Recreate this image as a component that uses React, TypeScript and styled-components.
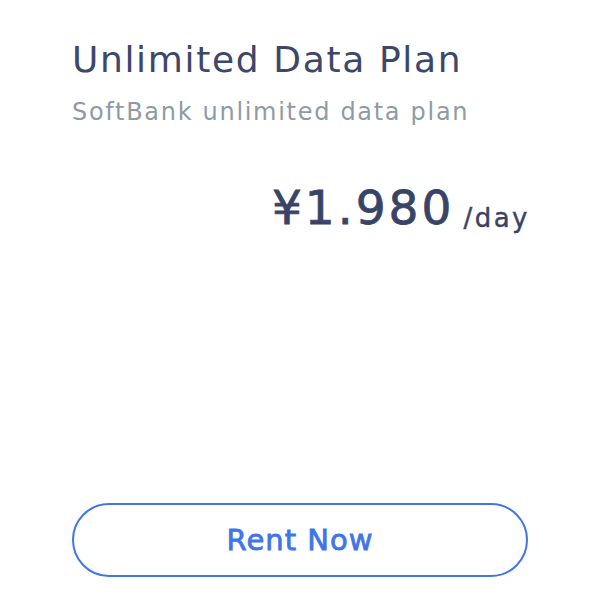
import React from "react";
import styled, { createGlobalStyle } from "styled-components";

const Global = createGlobalStyle`
  html, body { margin: 0; padding: 0; background: #ffffff; }
  body { font-family: "DejaVu Sans", "Open Sans", sans-serif; }
`;

const Card = styled.div`
  box-sizing: border-box;
  width: 600px;
  height: 600px;
  padding: 38px 72px 23px 72px;
  display: flex;
  flex-direction: column;
  background: #ffffff;
`;

const Title = styled.h2`
  margin: 0;
  font-size: 36px;
  font-weight: 400;
  color: #3c4769;
  line-height: 44px;
  letter-spacing: 1.65px;
  white-space: nowrap;
`;

const Subtitle = styled.p`
  margin: 15px 0 0 0;
  font-size: 24px;
  font-weight: 400;
  color: #8d9ba6;
  line-height: 30px;
  letter-spacing: 1.7px;
  white-space: nowrap;
`;

const PriceRow = styled.div`
  margin-top: 51px;
  display: flex;
  justify-content: flex-end;
  align-items: baseline;
  gap: 9px;
  color: #394366;
`;

const Amount = styled.span`
  font-size: 47px;
  font-weight: 400;
  line-height: 60px;
  letter-spacing: 3px;
  -webkit-text-stroke: 0.8px #394366;
`;

const Unit = styled.span`
  font-size: 26px;
  font-weight: 400;
  letter-spacing: 2.5px;
  margin-right: -2px;
  -webkit-text-stroke: 0.4px #394366;
  position: relative;
  top: 3px;
`;

const Spacer = styled.div`
  flex: 1;
`;

const RentButton = styled.button`
  box-sizing: border-box;
  width: 100%;
  height: 74px;
  border: 2px solid #3f74ea;
  border-radius: 37px;
  background: #ffffff;
  color: #3f74ea;
  font-family: inherit;
  font-size: 29px;
  font-weight: 400;
  letter-spacing: 1px;
  -webkit-text-stroke: 0.8px #3f74ea;
  cursor: pointer;
`;

export default function App() {
  return (
    <>
      <Global />
      <Card>
        <Title>Unlimited Data Plan</Title>
        <Subtitle>SoftBank unlimited data plan</Subtitle>
        <PriceRow>
          <Amount>¥1.980</Amount>
          <Unit>/day</Unit>
        </PriceRow>
        <Spacer />
        <RentButton>Rent Now</RentButton>
      </Card>
    </>
  );
}
